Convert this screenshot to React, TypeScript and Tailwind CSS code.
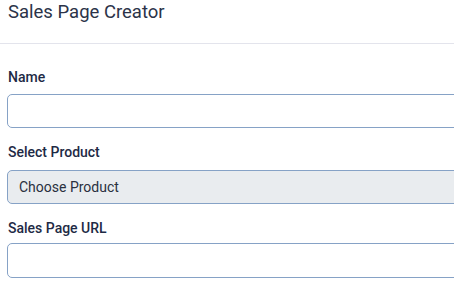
export default function App() {
  return (
    <div className="w-[454px] h-[294px] overflow-hidden bg-white" style={{ fontFamily: "Roboto, 'Liberation Sans', sans-serif" }}>
      <div className="w-[520px]">
        <div className="h-[44px] border-b border-[#e3e4ec] pl-[8px] pt-[0px]">
          <h1 className="text-[18.5px] leading-[25px] text-[#2b3348]">Sales Page Creator</h1>
        </div>
        <div className="pl-[7px] pt-[23px]">
          <label className="block pl-[1px] text-[14px] leading-[20px] font-medium text-[#1e2a45]">Name</label>
          <div className="mt-[7px] h-[34px] rounded-[5px] border border-[#86a2c6] bg-white" />
          <label className="block mt-[14px] pl-[1px] text-[14px] leading-[20px] font-medium text-[#1e2a45]">Select Product</label>
          <div className="mt-[8px] h-[34px] rounded-[5px] border border-[#86a2c6] bg-[#e9ecef] flex items-center pl-[11px] text-[14px] text-[#2a3040]">Choose Product</div>
          <label className="block mt-[14px] pl-[1px] text-[14px] leading-[20px] font-medium text-[#1e2a45]">Sales Page URL</label>
          <div className="mt-[5px] h-[35px] rounded-[5px] border border-[#86a2c6] bg-white" />
        </div>
      </div>
    </div>
  );
}
